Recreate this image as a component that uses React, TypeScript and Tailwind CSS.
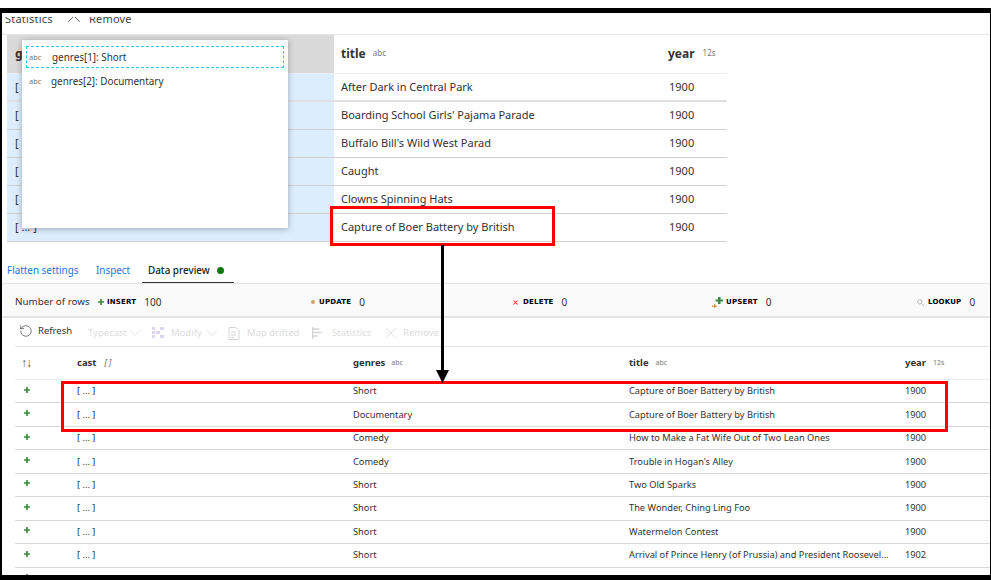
import React from 'react';
import {RotateCw, X, ChevronDown} from 'lucide-react';

const FONT = "font-['Noto_Sans','Open_Sans',sans-serif]";

const topRows = [
  ['After Dark in Central Park', '1900'],
  ["Boarding School Girls' Pajama Parade", '1900'],
  ["Buffalo Bill's Wild West Parad", '1900'],
  ['Caught', '1900'],
  ['Clowns Spinning Hats', '1900'],
  ['Capture of Boer Battery by British', '1900'],
];

const previewRows = [
  ['Short', 'Capture of Boer Battery by British', '1900'],
  ['Documentary', 'Capture of Boer Battery by British', '1900'],
  ['Comedy', 'How to Make a Fat Wife Out of Two Lean Ones', '1900'],
  ['Comedy', "Trouble in Hogan's Alley", '1900'],
  ['Short', 'Two Old Sparks', '1900'],
  ['Short', 'The Wonder, Ching Ling Foo', '1900'],
  ['Short', 'Watermelon Contest', '1900'],
  ['Short', 'Arrival of Prince Henry (of Prussia) and President Roosevel...', '1902'],
  ['Comedy', 'Sneaking of Cycle in Philippine Insurgents', '1901'],
];

const Plus = ({color = '#3c8a3c'}: {color?: string}) => (
  <svg width="6" height="6" viewBox="0 0 7 7">
    <path d="M2.5 0h2v2.5H7v2H4.5V7h-2V4.500H0v-2h2.500z" fill={color} />
  </svg>
);

const Stat = ({icon, label, value, className}: {icon: React.ReactNode; label: string; value: string; className: string}) => (
  <div className={`flex items-center ${className}`}>
    {icon}
    <span className="ml-[4px] text-[7px] font-bold tracking-[0.2px] text-black font-['DejaVu_Sans',sans-serif]">{label}</span>
    <span className="ml-[8px] text-[10px] text-[#333]">{value}</span>
  </div>
);

export default function App() {
  return (
    <div className={`relative w-[991px] h-[580px] overflow-hidden bg-white pt-2 ${FONT}`}>
      <div className="h-[567px] overflow-hidden border-t-[5px] border-l-2 border-r border-black">
        {/* clipped toolbar from the first capture */}
        <div className="h-[22px] border-b border-[#e6e6e6] pt-[4px]">
          <div className="h-[7px] overflow-hidden">
            <div className="flex items-center -mt-[6px] pl-[3px] text-[11px] tracking-[0.2px] text-[#444]">
              <span className="w-[58px]">Statistics</span>
              <X size={22} strokeWidth={1} className="text-[#555] -my-[3px] -translate-y-[3px]" />
              <span className="ml-[4px]">Remove</span>
            </div>
          </div>
        </div>

        {/* upper table */}
        <div className="w-[720px] ml-[5px] text-[11px] text-[#333]">
          <div className="flex h-[39px] border-b border-[#ececec]">
            <div className="w-[327px] bg-[#dadada] flex items-center pl-[8px] text-[12px] font-bold text-[#333]">g</div>
            <div className="w-[326px] flex items-center pl-[7px]">
              <span className="font-bold text-[12px]">title</span>
              <span className="ml-[7px] text-[8px] text-[#777] -mt-[2px]">abc</span>
            </div>
            <div className="flex-1 flex items-center pl-[8px]">
              <span className="font-bold text-[12px]">year</span>
              <span className="ml-[8px] text-[8px] text-[#777] -mt-[2px]">12s</span>
            </div>
          </div>
          {topRows.map((r, i) => (
            <div key={r[0]} className={`flex h-[28px] border-b ${i === 0 ? 'border-[#e0e0e0] border-b-2' : 'border-[#cfcfcf]'}`}>
              <div className="w-[327px] bg-[#dcedfd] flex items-center pl-[8px]">[ ... ]</div>
              <div className="w-[326px] flex items-center pl-[7px]">{r[0]}</div>
              <div className="flex-1 flex items-center pl-[9px]">{r[1]}</div>
            </div>
          ))}
        </div>

        {/* tabs */}
        <div className="h-[42px] flex items-end border-b border-[#e4e4e4] text-[9.9px]">
          <div className="flex items-center h-[31px] pl-[5px]">
            <span className="w-[89px] pt-[5px] text-[#1a73d9]">Flatten settings</span>
            <span className="w-[46px] pt-[5px] text-[#1a73d9]">Inspect</span>
            <div className="h-full flex items-center pl-[6px] pt-[7px] w-[92px] border-b-[1.5px] border-[#333] font-medium text-[#222]">
              Data preview
              <span className="ml-[7px] w-[7px] h-[7px] rounded-full bg-[#0b7a0b]" />
            </div>
          </div>
        </div>

        {/* row counts */}
        <div className="h-[34px] pt-[4px] bg-[#fafafa] border-b-2 border-[#e4e4e4] flex items-center text-[9.8px] text-[#333] whitespace-nowrap">
          <span className="ml-[13px] w-[83px] shrink-0">Number of rows</span>
          <div className="flex items-center w-[213px] shrink-0">
            <Plus />
            <span className="ml-[3px] text-[7px] font-bold tracking-[0.2px] text-black font-['DejaVu_Sans',sans-serif]">INSERT</span>
            <span className="ml-[8px] text-[10px]">100</span>
          </div>
          <Stat className="w-[201px] shrink-0" label="UPDATE" value="0" icon={<span className="w-[4px] h-[4px] rounded-full bg-[#d8a15c]" />} />
          <Stat className="w-[200px] shrink-0" label="DELETE" value="0" icon={<X size={7} strokeWidth={3.5} className="text-[#d83b1f]" />} />
          <Stat className="w-[205px] shrink-0" label="UPSERT" value="0" icon={
            <svg width="12" height="11" viewBox="0 0 12 11" className="-mr-[2px]">
              <path d="M6 0h2.500v2.500H11v2H8.500V7H6V4.500H3.500v-2H6z" fill="#3c8a3c" />
              <path d="M2 7h1.500v1.500H5V10H3.500v1H2v-1H0V8.500h2z" fill="#d8a15c" />
            </svg>} />
          <Stat className="shrink-0" label="LOOKUP" value="0" icon={
            <svg width="7" height="7" viewBox="0 0 7 7" fill="none" stroke="#aaa" strokeWidth="0.8">
              <circle cx="2.800" cy="2.800" r="2.200" /><path d="M4.500 4.500L7 7" />
            </svg>} />
        </div>

        {/* preview toolbar */}
        <div className="ml-[13px] h-[29px] border-b border-[#e2e2e2] flex items-center text-[9.5px] whitespace-nowrap">
          <RotateCw size={14} strokeWidth={1.100} className="ml-[4px] text-[#333] -mt-[2px] -scale-x-100" />
          <span className="ml-[5px] w-[34px] text-[#333] -mt-[1px]">Refresh</span>
          <div className="flex items-center h-[20px] mt-[2px] text-[#dcdcdc]">
            <span className="ml-[16px] w-[38px]">Typecast</span>
            <ChevronDown size={20} strokeWidth={1} className="-ml-[1px]" />
            <svg className="ml-[7px]" width="12" height="12" viewBox="0 0 12 12" fill="#dcd6ea">
              <rect x="0" y="0" width="3" height="3" /><rect x="0" y="4" width="3" height="3" /><rect x="0" y="8" width="3" height="3" />
              <rect x="8" y="0" width="4" height="3" /><rect x="8" y="8" width="4" height="3" /><rect x="4" y="4" width="4" height="3" />
            </svg>
            <span className="ml-[7px] w-[32px]">Modify</span>
            <ChevronDown size={20} strokeWidth={1} className="-ml-[1px]" />
            <svg className="ml-[6px]" width="12" height="13" viewBox="0 0 12 13" fill="none" stroke="#d4d4d4">
              <path d="M1 .5h7l3 3v9H1z" /><path d="M3 5h5M3 8h5M3 10.500h3" />
            </svg>
            <span className="ml-[7px] w-[53px]">Map drifted</span>
            <svg className="ml-[12px]" width="11" height="12" viewBox="0 0 11 12" fill="none" stroke="#d4d4d4">
              <path d="M.5 0v12M.5 2h7M.5 5.500h9M.5 9h5" strokeWidth="1.500" />
            </svg>
            <span className="ml-[9px] w-[39px]">Statistics</span>
            <X size={20} strokeWidth={1} className="ml-[10px]" />
            <span className="ml-[2px]">Remove</span>
          </div>
        </div>

        {/* preview table */}
        <div className="ml-[13px] text-[9.25px] text-[#333] whitespace-nowrap">
          <div className="flex h-[33px] items-center border-b border-[#ececec] text-[9.500px]">
            <div className="w-[62px] pl-[6px] text-[#555] text-[12px] tracking-[-1px]">↑↓</div>
            <div className="w-[276px] flex items-center">
              <span className="font-bold">cast</span>
              <span className="ml-[8px] italic text-[8px] text-[#666]">[ ]</span>
            </div>
            <div className="w-[276px] flex items-center">
              <span className="font-bold">genres</span>
              <span className="ml-[6px] text-[7px] text-[#777]">abc</span>
            </div>
            <div className="w-[276px] flex items-center">
              <span className="font-bold">title</span>
              <span className="ml-[7px] text-[7px] text-[#777]">abc</span>
            </div>
            <div className="flex items-center">
              <span className="font-bold">year</span>
              <span className="ml-[7px] text-[7px] text-[#777]">12s</span>
            </div>
          </div>
          {previewRows.map((r, i) => (
            <div key={i} className="flex h-[23.45px] items-center border-b border-[#d8d8d8]">
              <div className="w-[62px] pl-[9px] -mt-[3px]"><Plus /></div>
              <div className="w-[276px]">[ ... ]</div>
              <div className="w-[276px]">{r[0]}</div>
              <div className="w-[276px]">{r[1]}</div>
              <div>{r[2]}</div>
            </div>
          ))}
        </div>
      </div>

      {/* bottom frame edge */}
      <div className="absolute left-0 right-0 bottom-0 h-[5px] bg-black" />

      {/* column popup */}
      <div className="absolute left-[22px] top-[40px] w-[266px] h-[188px] bg-white shadow-[0_1px_6px_rgba(0,0,0,0.3)] pt-[6px] px-[4px] text-[9.9px] text-[#333]">
        <div className="h-[22px] flex items-center border border-dashed border-[#26c6e8] pl-[2px] pt-[1px]">
          <span className="w-[23px] text-[7.500px] text-[#777]">abc</span>
          genres[1]: Short
        </div>
        <div className="h-[26px] flex items-center pl-[3px] pt-[1px]">
          <span className="w-[22px] text-[7.500px] text-[#777]">abc</span>
          genres[2]: Documentary
        </div>
      </div>

      {/* callout annotations */}
      <div className="absolute left-[330px] top-[206px] w-[225px] h-[40px] border-[3px] border-[#f00]" />
      <div className="absolute left-[61px] top-[381px] w-[887px] h-[51px] border-[3px] border-[#f00]" />
      <div className="absolute left-[441px] top-[245px] w-[3px] h-[127px] bg-black" />
      <svg className="absolute left-[436px] top-[370px]" width="13" height="13" viewBox="0 0 13 13">
        <path d="M0 0h13L6.500 13z" fill="#000" />
      </svg>
    </div>
  );
}
